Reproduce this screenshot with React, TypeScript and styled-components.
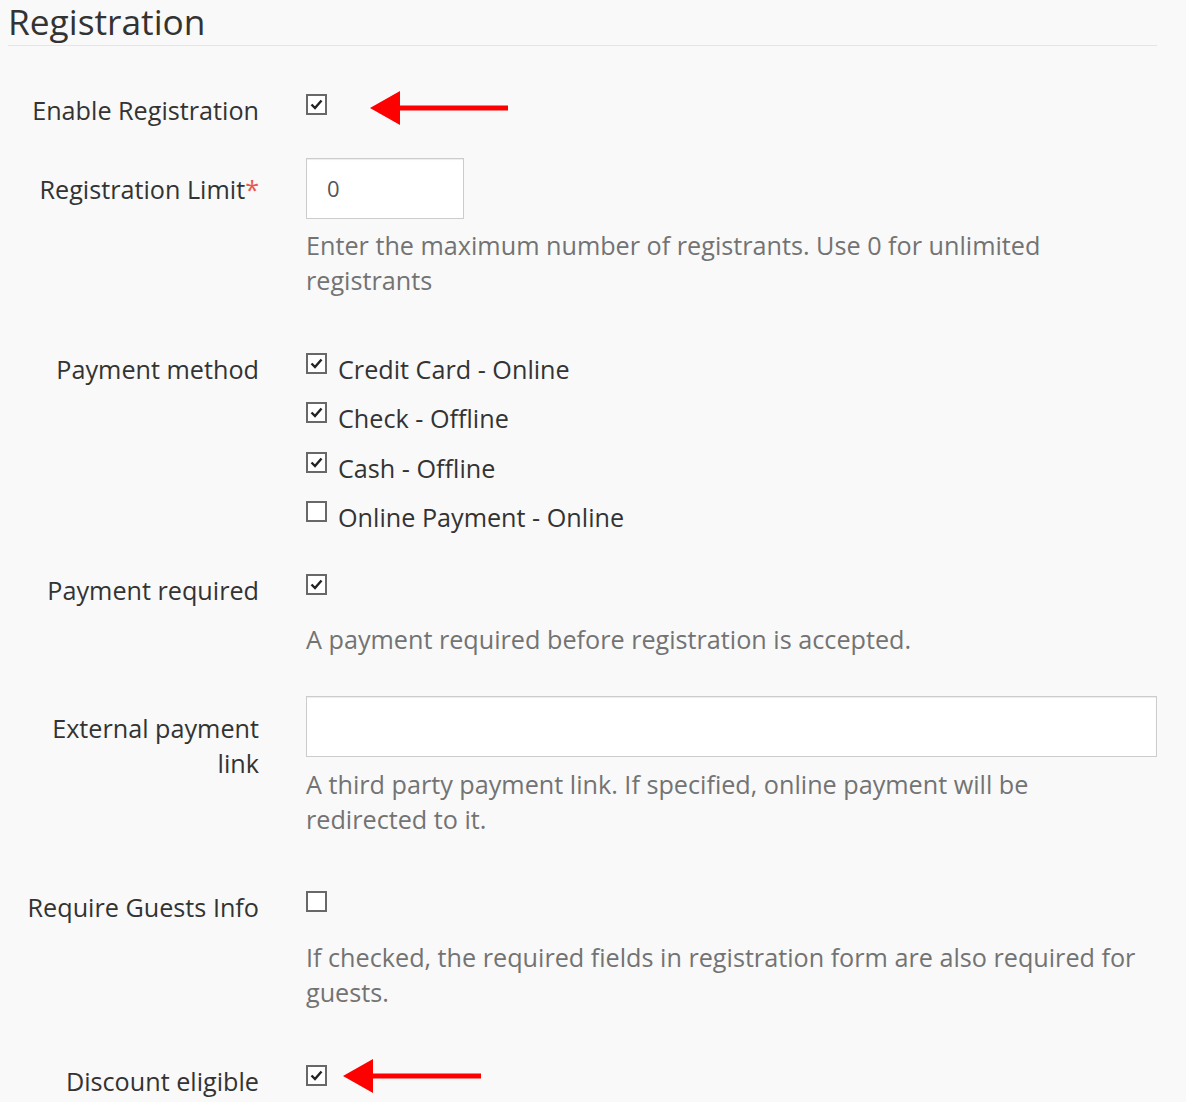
import { FC, ReactNode } from 'react';
import styled, { createGlobalStyle } from 'styled-components';

const GlobalStyle = createGlobalStyle`
  html, body {
    margin: 0;
    padding: 0;
    background: #f9f9f9;
  }
  body {
    font-family: 'Open Sans', 'Noto Sans', sans-serif;
    color: #333;
  }
`;

const Page = styled.div`
  width: 1149px;
  padding: 0 0 40px 8px;
`;

const Heading = styled.h3`
  margin: 0;
  font-size: 35.3px;
  line-height: 42px;
  font-weight: 400;
  color: #333;
  border-bottom: 1px solid #e5e5e5;
  padding-bottom: 3px;
`;

const Row = styled.div<{ $mt: number }>`
  display: grid;
  grid-template-columns: 251px 1fr;
  column-gap: 47px;
  align-items: start;
  margin-top: ${(p) => p.$mt}px;
`;

const Label = styled.label<{ $pt?: number }>`
  text-align: right;
  font-size: 25.2px;
  line-height: 35px;
  color: #333;
  padding-top: ${(p) => p.$pt ?? 0}px;
`;

const Required = styled.span`
  color: #e8574c;
`;

const Control = styled.div`
  display: flex;
  flex-direction: column;
  min-width: 0;
`;

const OptionList = styled.div`
  display: flex;
  flex-direction: column;
  gap: 14.3px;
`;

const Option = styled.div`
  position: relative;
  display: flex;
  align-items: flex-start;
  gap: 11px;
  font-size: 25.2px;
  line-height: 35px;
  color: #333;
  min-height: 35px;
`;

const Box = styled.svg`
  flex: none;
  margin-top: 1px;
`;

const TextInput = styled.input<{ $w?: number }>`
  box-sizing: border-box;
  width: ${(p) => (p.$w ? `${p.$w}px` : '100%')};
  height: 61px;
  padding: 0 20px;
  border: 1px solid #ccc;
  border-radius: 0;
  background: #fff;
  box-shadow: inset 0 1px 1px rgba(0, 0, 0, 0.075);
  font-family: 'Open Sans', 'Noto Sans', sans-serif;
  font-size: 22px;
  color: #555;
  outline: none;
`;

const Help = styled.p<{ $mt: number }>`
  margin: ${(p) => p.$mt}px 0 0;
  max-width: 840px;
  font-size: 25.2px;
  line-height: 35px;
  color: #737373;
`;

const Arrow = styled.svg<{ $left: number; $top: number }>`
  position: absolute;
  left: ${(p) => p.$left}px;
  top: ${(p) => p.$top}px;
`;

const RedArrow: FC<{ left: number; top: number; length: number }> = ({ left, top, length }) => (
  <Arrow $left={left} $top={top} width={length} height={36} viewBox={`0 0 ${length} 36`}>
    <polygon points='0,18 30,1 30,35' fill='#ff0000' />
    <rect x='29' y='15.5' width={length - 29} height='5' fill='#ff0000' />
  </Arrow>
);

const Checkbox: FC<{ checked?: boolean }> = ({ checked }) => (
  <Box width='21' height='21' viewBox='0 0 21 21'>
    <rect x='1' y='1' width='19' height='19' fill='#fff' stroke='#686868' strokeWidth='2' />
    {checked && <path d='M5.5 10.5 L9 14 L15.5 6.5' fill='none' stroke='#222' strokeWidth='2.4' />}
  </Box>
);

const CheckLine: FC<{ checked?: boolean; children?: ReactNode }> = ({ checked, children }) => (
  <Option>
    <Checkbox checked={checked} />
    {children}
  </Option>
);

export default function App() {
  return (
    <Page>
      <GlobalStyle />
      <Heading>Registration</Heading>

      <Row $mt={47}>
        <Label>Enable Registration</Label>
        <Control>
          <CheckLine checked>
            <RedArrow left={64} top={-3} length={138} />
          </CheckLine>
        </Control>
      </Row>

      <Row $mt={29.5}>
        <Label $pt={14.5}>
          Registration Limit<Required>*</Required>
        </Label>
        <Control>
          <TextInput $w={158} defaultValue='0' />
          <Help $mt={9.5}>Enter the maximum number of registrants. Use 0 for unlimited registrants</Help>
        </Control>
      </Row>

      <Row $mt={54}>
        <Label>Payment method</Label>
        <Control>
          <OptionList>
            <CheckLine checked>Credit Card - Online</CheckLine>
            <CheckLine checked>Check - Offline</CheckLine>
            <CheckLine checked>Cash - Offline</CheckLine>
            <CheckLine>Online Payment - Online</CheckLine>
          </OptionList>
        </Control>
      </Row>

      <Row $mt={38}>
        <Label>Payment required</Label>
        <Control>
          <CheckLine checked />
          <Help $mt={14}>A payment required before registration is accepted.</Help>
        </Control>
      </Row>

      <Row $mt={39.5}>
        <Label $pt={14.5}>External payment link</Label>
        <Control>
          <TextInput />
          <Help $mt={9.5}>A third party payment link. If specified, online payment will be redirected to it.</Help>
        </Control>
      </Row>

      <Row $mt={53}>
        <Label>Require Guests Info</Label>
        <Control>
          <CheckLine />
          <Help $mt={15}>If checked, the required fields in registration form are also required for guests.</Help>
        </Control>
      </Row>

      <Row $mt={54}>
        <Label>Discount eligible</Label>
        <Control>
          <CheckLine checked>
            <RedArrow left={37} top={-6} length={138} />
          </CheckLine>
        </Control>
      </Row>
    </Page>
  );
}
